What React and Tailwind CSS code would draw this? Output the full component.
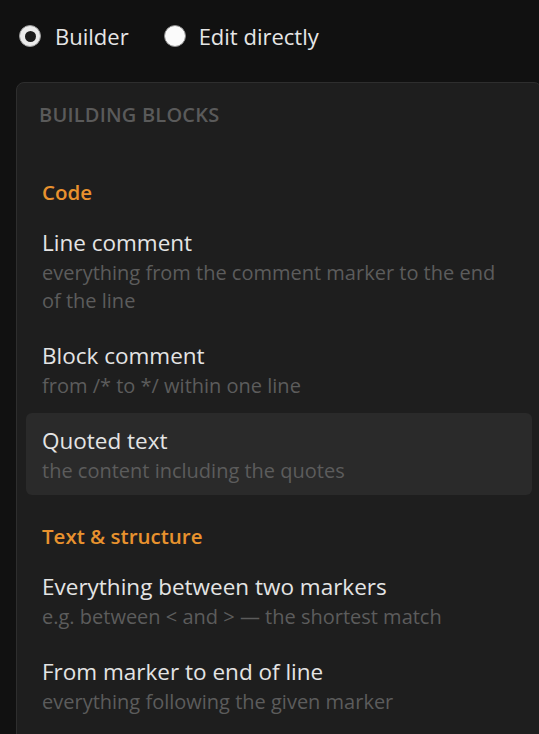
import React from "react";

const sections = [
  {
    title: "Code",
    items: [
      { t: "Line comment", d: "everything from the comment marker to the end of the line" },
      { t: "Block comment", d: "from /* to */ within one line" },
      { t: "Quoted text", d: "the content including the quotes", active: true },
    ],
  },
  {
    title: "Text & structure",
    items: [
      { t: "Everything between two markers", d: "e.g. between < and > — the shortest match" },
      { t: "From marker to end of line", d: "everything following the given marker" },
    ],
  },
];

function Radio({ checked }) {
  return checked ? (
    <span className="flex h-[22px] w-[22px] items-center justify-center rounded-full border border-[#9a9a9a] bg-[#ececec]">
      <span className="h-[11px] w-[11px] rounded-full bg-[#1c1c1c]" />
    </span>
  ) : (
    <span className="h-[22px] w-[22px] rounded-full border border-[#8a8a8a] bg-[#fafafa]" />
  );
}

export default function App() {
  return (
    <div
      className="h-[734px] w-full overflow-hidden bg-[#111111]"
      style={{ fontFamily: '"Open Sans", "Noto Sans", sans-serif' }}
    >
      <div className="mt-[24px] flex h-[24px] items-center gap-[35px] pl-[19px] text-[22px] text-[#e6e6e6]">
        <label className="flex items-center gap-[14px]">
          <Radio checked />
          <span className="leading-[24px]">Builder</span>
        </label>
        <label className="flex items-center gap-[13px]">
          <Radio />
          <span className="leading-[24px]">Edit directly</span>
        </label>
      </div>

      <div className="ml-[16px] mt-[34px] w-[526px] rounded-lg border border-[#2e2e2e] bg-[#1e1e1e] px-[9px] pb-6">
        <div className="pl-[13px] pt-[19px] text-[20px] font-semibold leading-[26px] tracking-[0.01em] text-[#5a5a5a]">
          BUILDING BLOCKS
        </div>
        <div className="mt-[50px]">
          {sections.map((s, i) => (
            <div key={s.title} className={i > 0 ? "mt-[27px]" : ""}>
              <div className="mb-[9px] px-4 text-[20.5px] font-semibold leading-[28px] text-[#e8922e]">
                {s.title}
              </div>
              <div className="flex flex-col gap-[3px]">
                {s.items.map((it) => (
                  <div
                    key={it.t}
                    className={
                      "rounded-md pl-4 pr-[22px] pt-[11px] pb-[10px] " +
                      (it.active ? "bg-[#2a2a2a]" : "")
                    }
                  >
                    <div className="text-[22.5px] leading-[33px] text-[#e4e4e4]">{it.t}</div>
                    <div className="text-[20px] leading-[28px] text-[#5c5c5c]">{it.d}</div>
                  </div>
                ))}
              </div>
            </div>
          ))}
        </div>
      </div>
    </div>
  );
}
